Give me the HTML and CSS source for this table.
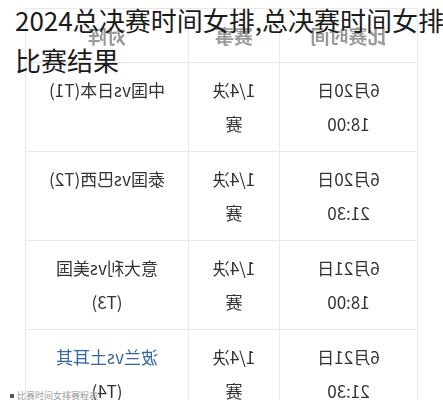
FILE: index.html
```html
<!DOCTYPE html>
<html lang="zh">
<head>
<meta charset="utf-8">
<title>2024总决赛时间女排</title>
<link rel="stylesheet" href="styles.css">
</head>
<body>
<div class="shot">
  <div class="figure">
    <table class="fixtures">
      <colgroup>
        <col class="c-time">
        <col class="c-stage">
        <col class="c-match">
      </colgroup>
      <thead>
        <tr><th>比赛时间</th><th>赛事</th><th>对阵</th></tr>
      </thead>
      <tbody>
        <tr><td class="time">6月20日 18:00</td><td class="stage">1/4决赛</td><td class="match">中国vs日本(T1)</td></tr>
        <tr><td class="time">6月20日 21:30</td><td class="stage">1/4决赛</td><td class="match">泰国vs巴西(T2)</td></tr>
        <tr><td class="time">6月21日 18:00</td><td class="stage">1/4决赛</td><td class="match">意大利vs美国(T3)</td></tr>
        <tr><td class="time">6月21日 21:30</td><td class="stage">1/4决赛</td><td class="match"><a class="link">波兰vs土耳其</a>(T4)</td></tr>
      </tbody>
    </table>
    <p class="source"><span class="dot"></span>比赛时间女排赛程表</p>
  </div>
  <h1 class="title">2024总决赛时间女排,总决赛时间女排比赛结果</h1>
</div>
</body>
</html>
```

FILE: styles.css
```css
html, body {
  margin: 0;
  padding: 0;
  background: #fff;
  overflow: hidden;
}

.shot {
  position: relative;
  width: 443px;
  height: 400px;
  overflow: hidden;
  font-family: "Noto Sans CJK SC", "Noto Sans", sans-serif;
}

.figure {
  padding: 8px 0 0 25px;
}

.fixtures {
  border-collapse: collapse;
  table-layout: fixed;
  width: 392px;
  transform: scaleX(-1);
  filter: blur(0.4px);
  color: #333;
  font-size: 17px;
  line-height: 34px;
  text-align: center;
}

.c-time { width: 138px; }
.c-stage { width: 91px; }
.c-match { width: 163px; }

.fixtures th {
  height: 53px;
  padding: 0;
  color: #9a9a9a;
  font-size: 19px;
  font-weight: 700;
  border: 1px solid #e8e8e8;
}

.fixtures td {
  vertical-align: top;
  padding: 10px 18px;
  border: 1px solid #e8e8e8;
}

.fixtures td.time { padding-left: 20px; padding-right: 20px; }
.fixtures td.stage { padding-left: 18px; padding-right: 18px; }
.fixtures td.match { padding-left: 16px; padding-right: 16px; }

.link {
  color: #3465a4;
}

.source {
  position: absolute;
  left: 10px;
  top: 390px;
  margin: 0;
  font-size: 9px;
  line-height: 12px;
  color: #9a9a9a;
  display: flex;
  align-items: center;
  gap: 3px;
}

.dot {
  width: 4px;
  height: 4px;
  background: #555;
}

.title {
  position: absolute;
  top: 0;
  left: 15px;
  width: 440px;
  margin: 0;
  font-size: 26px;
  font-weight: 400;
  line-height: 40px;
  color: #1b1b1b;
}
```
